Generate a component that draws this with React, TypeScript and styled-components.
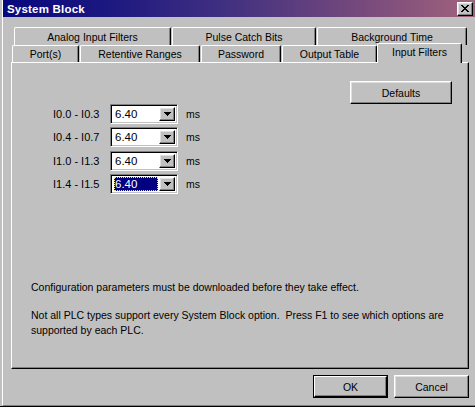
import React from 'react'
import styled, { createGlobalStyle, css } from 'styled-components'

const GlobalStyle = createGlobalStyle`
  html, body { margin:0; padding:0; background:#fff; overflow:hidden; }
  body { font-family:"Liberation Sans", Arial, sans-serif; font-size:10.5px; color:#000; }
  * { box-sizing:border-box; }
`

const raised = css`
  background:#c0c0c0;
  border-top:1px solid #fff;
  border-left:1px solid #fff;
  border-right:1px solid #000;
  border-bottom:1px solid #000;
  box-shadow:inset -1px -1px #808080, inset 1px 1px #dfdfdf;
`

const Window = styled.div`
  width:478px;
  height:407px;
  background:#c0c0c0;
  padding-left:2px;
  border-bottom:1px solid #000;
  display:flex;
`
const Frame = styled.div`
  flex:1;
  display:flex;
  flex-direction:column;
  border-left:1px solid #fff;
  border-bottom:1px solid #808080;
`
const TitleBar = styled.div`
  height:17px;
  flex:none;
  display:flex;
  align-items:center;
  justify-content:space-between;
  padding:0 5px 0 4px;
  background:linear-gradient(90deg,#08087e 0%,#1c1880 22%,#463380 50%,#784a7c 76%,#a2647c 100%);
`
const Title = styled.span`
  color:#fff;
  font-weight:bold;
  font-size:11.5px;
  letter-spacing:0.2px;
`
const CloseBtn = styled.div`
  ${raised};
  width:16px;
  height:14px;
  display:flex;
  align-items:center;
  justify-content:center;
`
const Body = styled.div`
  flex:1;
  display:flex;
  flex-direction:column;
  padding:10px 9px 0 8px;
`
const TabRow = styled.div<{ $indent: number; $h: number }>`
  display:flex;
  align-items:flex-end;
  height:${p => p.$h}px;
  padding-left:${p => p.$indent}px;
  gap:1px;
`
const Tab = styled.div<{ $w: number; $h: number; $active?: boolean }>`
  width:${p => p.$w}px;
  height:${p => p.$h}px;
  flex:none;
  display:flex;
  align-items:center;
  justify-content:center;
  background:#c0c0c0;
  border-top:1px solid #fff;
  border-left:1px solid #fff;
  border-right:1px solid #000;
  border-radius:2px 2px 0 0;
  box-shadow:inset -1px 0 #808080;
  ${p => p.$active && css`
    position:relative;
    z-index:1;
    margin-top:-2px;
    margin-bottom:-1px;
    margin-left:-1px;
    padding-bottom:3px;
  `}
`
const Panel = styled.div`
  height:307px;
  flex:none;
  display:flex;
  flex-direction:column;
  padding:18px 16px 0 19px;
  border-top:1px solid #fff;
  border-left:1px solid #fff;
  border-right:1px solid #000;
  border-bottom:1px solid #000;
  box-shadow:inset -1px -1px #808080;
`
const TopBar = styled.div`
  display:flex;
  justify-content:flex-end;
`
const Button = styled.div<{ $w: number; $default?: boolean }>`
  width:${p => p.$w}px;
  height:23px;
  display:flex;
  align-items:center;
  justify-content:center;
  ${raised};
  ${p => p.$default && css`
    outline:1px solid #000;
    outline-offset:0;
    box-shadow:inset -1px -1px #808080;
    width:${p.$w - 2}px;
    height:21px;
    margin:1px;
  `}
`
const FilterGrid = styled.div`
  display:grid;
  grid-template-columns:46px 68px auto;
  grid-auto-rows:20px;
  row-gap:3.33px;
  column-gap:11px;
  margin-left:22px;
  align-items:center;
`
const Label = styled.span`
  white-space:nowrap;
  font-size:11px;
`
const Unit = styled.span`
  margin-left:-3px;
`
const Combo = styled.div`
  height:20px;
  display:flex;
  align-items:stretch;
  background:#fff;
  border-top:1px solid #808080;
  border-left:1px solid #808080;
  border-right:1px solid #fff;
  border-bottom:1px solid #fff;
  box-shadow:inset 1px 1px #000, inset -1px -1px #c0c0c0;
  padding:2px;
`
const Field = styled.div<{ $focus?: boolean }>`
  flex:1;
  display:flex;
  align-items:center;
  padding-left:2px;
  margin-right:1px;
  font-size:11.5px;
  ${p => p.$focus && css`
    background:#000080;
    color:#fff;
    outline:1px dotted #e8e890;
    outline-offset:-1px;
    margin-left:1px;
    padding-left:1px;
  `}
`
const DropBtn = styled.div`
  width:16px;
  flex:none;
  display:flex;
  align-items:center;
  justify-content:center;
  ${raised};
`
const Notes = styled.div`
  margin-top:86px;
  line-height:15px;
  display:flex;
  flex-direction:column;
  gap:13px;
`
const Footer = styled.div`
  flex:1;
  display:flex;
  justify-content:flex-end;
  align-items:flex-start;
  gap:6px;
  padding-top:6px;
`

const CloseGlyph = () => (
  <svg width="8" height="7" viewBox="0 0 8 7" shapeRendering="crispEdges">
    {[
      [0, 0], [6, 0], [1, 1], [5, 1], [2, 2], [4, 2], [3, 3], [2, 4], [4, 4], [1, 5], [5, 5], [0, 6], [6, 6],
    ].map(([x, y], i) => <rect key={i} x={x} y={y} width="2" height="1" fill="#000" />)}
  </svg>
)

const Arrow = () => (
  <svg width="7" height="4" viewBox="0 0 7 4" shapeRendering="crispEdges">
    <rect x="0" y="0" width="7" height="1" fill="#000" />
    <rect x="1" y="1" width="5" height="1" fill="#000" />
    <rect x="2" y="2" width="3" height="1" fill="#000" />
    <rect x="3" y="3" width="1" height="1" fill="#000" />
  </svg>
)

const filters = [
  { range: 'I0.0 - I0.3', value: '6.40' },
  { range: 'I0.4 - I0.7', value: '6.40' },
  { range: 'I1.0 - I1.3', value: '6.40' },
  { range: 'I1.4 - I1.5', value: '6.40', focus: true },
]

const backTabs = [
  { name: 'Analog Input Filters', w: 157 },
  { name: 'Pulse Catch Bits', w: 144 },
  { name: 'Background Time', w: 150 },
]
const frontTabs = [
  { name: 'Port(s)', w: 67 },
  { name: 'Retentive Ranges', w: 120 },
  { name: 'Password', w: 80 },
  { name: 'Output Table', w: 95 },
  { name: 'Input Filters', w: 85, active: true },
]

const App = () => (
  <>
    <GlobalStyle />
    <Window>
      <Frame>
        <TitleBar>
          <Title>System Block</Title>
          <CloseBtn><CloseGlyph /></CloseBtn>
        </TitleBar>
        <Body>
          <TabRow $indent={3} $h={18}>
            {backTabs.map(t => <Tab key={t.name} $w={t.w} $h={18}>{t.name}</Tab>)}
          </TabRow>
          <TabRow $indent={1} $h={17}>
            {frontTabs.map(t => (
              <Tab key={t.name} $w={t.w} $h={t.active ? 20 : 17} $active={t.active}>{t.name}</Tab>
            ))}
          </TabRow>
          <Panel>
            <TopBar>
              <Button $w={102}>Defaults</Button>
            </TopBar>
            <FilterGrid>
              {filters.map(f => (
                <React.Fragment key={f.range}>
                  <Label>{f.range}</Label>
                  <Combo>
                    <Field $focus={f.focus}>{f.value}</Field>
                    <DropBtn><Arrow /></DropBtn>
                  </Combo>
                  <Unit>ms</Unit>
                </React.Fragment>
              ))}
            </FilterGrid>
            <Notes>
              <div>Configuration parameters must be downloaded before they take effect.</div>
              <div>
                Not all PLC types support every System Block option.&nbsp; Press F1 to see which options are<br />
                supported by each PLC.
              </div>
            </Notes>
          </Panel>
          <Footer>
            <Button $w={75} $default>OK</Button>
            <Button $w={75}>Cancel</Button>
          </Footer>
        </Body>
      </Frame>
    </Window>
  </>
)

export default App
